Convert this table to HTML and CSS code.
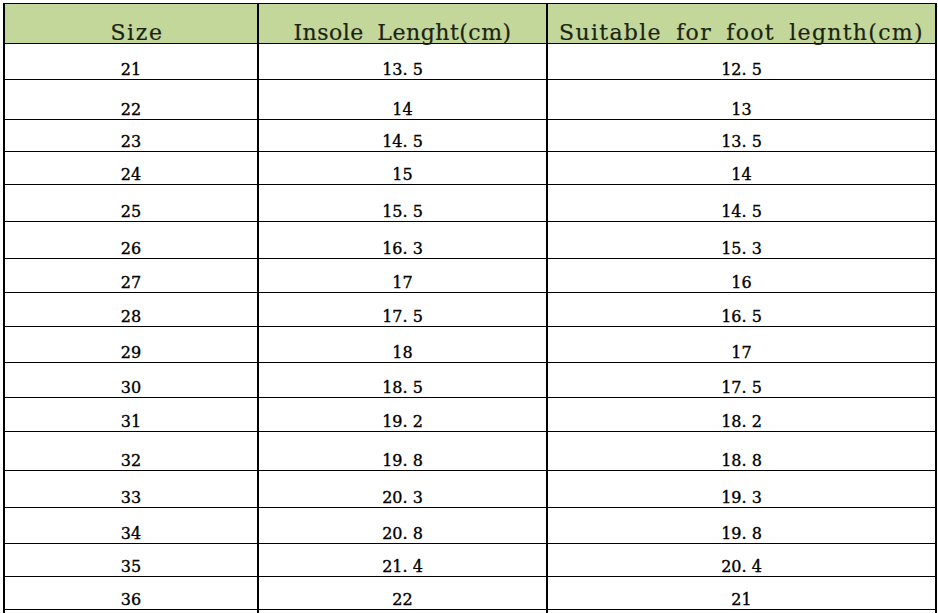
FILE: index.html
```html
<!DOCTYPE html>
<html>
<head>
<meta charset="utf-8">
<link rel="stylesheet" href="styles.css">
</head>
<body>
<table class="size-table">
  <colgroup>
    <col class="c1"><col class="c2"><col class="c3">
  </colgroup>
  <thead>
    <tr class="head"><th class="th-size"><span class="lead"></span>Size</th><th class="th-insole">Insole Lenght(cm)</th><th class="th-suit">Suitable for foot legnth(cm)</th></tr>
  </thead>
  <tbody>
    <tr class="h36"><td>21</td><td>13. 5</td><td>12. 5</td></tr>
    <tr class="h40"><td>22</td><td>14</td><td>13</td></tr>
    <tr class="h31"><td>23</td><td>14. 5</td><td>13. 5</td></tr>
    <tr class="h33"><td>24</td><td>15</td><td>14</td></tr>
    <tr class="h37"><td>25</td><td>15. 5</td><td>14. 5</td></tr>
    <tr class="h37"><td>26</td><td>16. 3</td><td>15. 3</td></tr>
    <tr class="h34"><td>27</td><td>17</td><td>16</td></tr>
    <tr class="h34"><td>28</td><td>17. 5</td><td>16. 5</td></tr>
    <tr class="h36"><td>29</td><td>18</td><td>17</td></tr>
    <tr class="h35"><td>30</td><td>18. 5</td><td>17. 5</td></tr>
    <tr class="h34"><td>31</td><td>19. 2</td><td>18. 2</td></tr>
    <tr class="h39"><td>32</td><td>19. 8</td><td>18. 8</td></tr>
    <tr class="h37"><td>33</td><td>20. 3</td><td>19. 3</td></tr>
    <tr class="h36"><td>34</td><td>20. 8</td><td>19. 8</td></tr>
    <tr class="h33"><td>35</td><td>21. 4</td><td>20. 4</td></tr>
    <tr class="h33"><td>36</td><td>22</td><td>21</td></tr>
    <tr class="h36"><td></td><td></td><td></td></tr>
  </tbody>
</table>
</body>
</html>
```
FILE: styles.css
```css
html, body {
  margin: 0;
  padding: 0;
  background: #fff;
  height: 613px;
  overflow: hidden;
}
body {
  padding: 3px 0 0 3px;
  box-sizing: border-box;
}
.size-table {
  border-collapse: collapse;
  table-layout: fixed;
  width: 932px;
}
.c1 { width: 254px; }
.c2 { width: 289px; }
.c3 { width: 389px; }
.size-table th,
.size-table td {
  border-top: 1px solid #000;
  border-bottom: 1px solid #000;
  border-left: 2px solid #000;
  border-right: 2px solid #000;
  text-align: center;
  vertical-align: bottom;
  padding: 0;
}
.size-table th {
  background: #c4d79b;
  font-family: "DejaVu Serif", serif;
  font-weight: normal;
  font-size: 22px;
  letter-spacing: 1.6px;
  word-spacing: 6px;
  line-height: 20px;
  color: #1a2312;
  white-space: nowrap;
  -webkit-text-stroke: 0.2px #1a2312;
}
.size-table th.th-insole {
  letter-spacing: 0.5px;
}
.size-table th.th-suit {
  letter-spacing: 1.3px;
}
.lead {
  display: inline-block;
  width: 12px;
}
.size-table td {
  font-family: "DejaVu Serif", serif;
  font-size: 16px;
  line-height: 16px;
  color: #000;
  padding-bottom: 1px;
  -webkit-text-stroke: 0.35px #000;
}
.head { height: 40px; }
.h31 { height: 31.5px; }
.h33 { height: 33px; }
.h34 { height: 34px; }
.h35 { height: 35px; }
.h36 { height: 36px; }
.h37 { height: 37px; }
.h39 { height: 39px; }
.h40 { height: 40px; }
```
